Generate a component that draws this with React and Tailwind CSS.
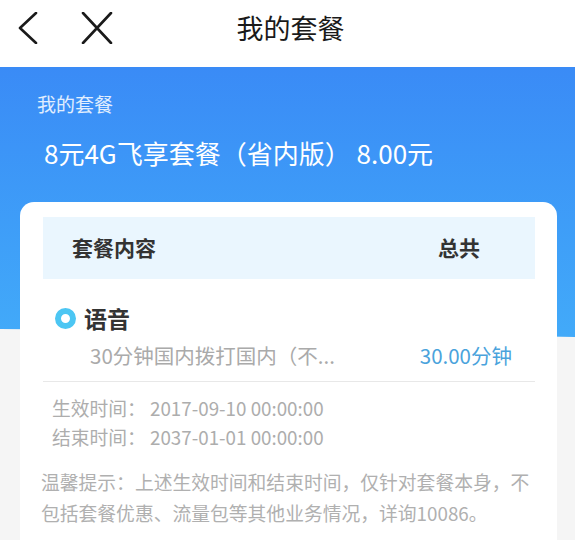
export default function App() {
  return (
    <div className="w-[575px] h-[540px] overflow-hidden bg-[#f5f5f5] font-['Noto_Sans_CJK_SC','Noto_Sans',sans-serif]">
      <header className="relative h-[67px] bg-white flex items-center">
        <svg className="absolute left-[16px] top-[12px]" width="24" height="32" viewBox="0 0 24 32" fill="none">
          <path d="M20 1 L4 16 L20 31" stroke="#1a1a1a" strokeWidth="2.6" strokeLinecap="round" strokeLinejoin="round" />
        </svg>
        <svg className="absolute left-[80px] top-[12px]" width="34" height="32" viewBox="0 0 34 32" fill="none">
          <path d="M3 1 L31 31 M31 1 L3 31" stroke="#1a1a1a" strokeWidth="2.6" strokeLinecap="round" />
        </svg>
        <h1 className="w-full text-center text-[27px] leading-none text-[#1a1a1a] pl-[6px] -mt-[12px]">我的套餐</h1>
      </header>

      <div className="relative">
        <div className="absolute inset-x-0 top-0 h-[270px] bg-gradient-to-b from-[#3a8bf6] to-[#42aaf9] [clip-path:polygon(0_0,100%_0,100%_100%,50%_98%,0_97%)]" />
        <div className="relative">
          <p className="pl-[37px] pt-[27px] text-[19px] leading-[20px] text-white/85">我的套餐</p>
          <p className="pl-[44px] pt-[23px] text-[26px] leading-[31px] text-white whitespace-pre">8元4G飞享套餐（省内版） 8.00元</p>

          <div className="ml-[20px] w-[537px] mt-[34px] bg-white rounded-t-[14px] pl-[23px] pr-[22px] pt-[15px] h-[400px]">
            <div className="h-[62px] bg-[#eaf6fe] flex items-center justify-between pl-[29px] pr-[55px]">
              <span className="text-[21px] font-bold text-[#333]">套餐内容</span>
              <span className="text-[21px] font-bold text-[#333]">总共</span>
            </div>

            <div className="border-b border-[#e8e8e8] pb-[13px]">
              <div className="flex items-center pt-[24px] pl-[12px]">
                <span className="w-[21px] h-[21px] rounded-full border-[6px] border-[#4cc6f3] bg-white" />
                <span className="ml-[8px] text-[23px] font-bold text-[#333] leading-[30px]">语音</span>
              </div>
              <div className="flex items-center justify-between pl-[47px] pr-[23px] pt-[9px]">
                <span className="text-[20.5px] text-[#aaaaaa] leading-[26px]">30分钟国内拨打国内（不...</span>
                <span className="text-[20.5px] text-[#4aa3dc] leading-[26px]">30.00分钟</span>
              </div>
            </div>

            <div className="pl-[9px] pt-[11px] text-[18.8px] text-[#adadad] leading-[29px]">
              <div className="flex"><span className="w-[98px]">生效时间：</span><span>2017-09-10 00:00:00</span></div>
              <div className="flex"><span className="w-[98px]">结束时间：</span><span>2037-01-01 00:00:00</span></div>
            </div>

            <p className="mt-[15px] -ml-[2px] text-[18.8px] text-[#b0b0b0] leading-[31px] whitespace-nowrap">
              温馨提示：上述生效时间和结束时间，仅针对套餐本身，不<br />包括套餐优惠、流量包等其他业务情况，详询10086。
            </p>
          </div>
        </div>
      </div>
    </div>
  );
}
